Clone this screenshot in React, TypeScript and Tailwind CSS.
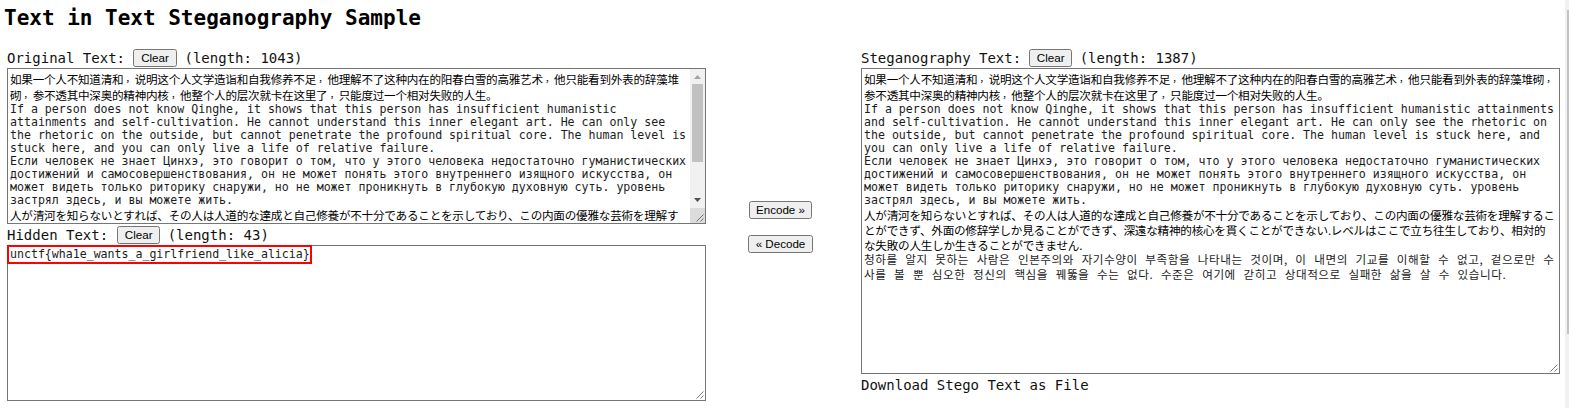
import React from "react";

const zh = "h-[16px] leading-[16px] text-[11.6px] tracking-[-0.26px] font-['Noto_Sans_CJK_SC','Noto_Sans_CJK_TC',sans-serif]";
const en = "h-[13px] leading-[13px] text-[11.6px] tracking-[-0.01px] text-[#1c1c1c] font-['DejaVu_Sans_Mono',monospace]";
const ja = "h-[15px] leading-[16px] text-[11.6px] tracking-[-0.24px] font-['Noto_Sans_CJK_JP',sans-serif]";
const ko = "h-[14.6px] leading-[14.6px] text-[11.6px] tracking-[0.54px] [word-spacing:4.53px] text-[#1c1c1c] font-['Noto_Sans_CJK_KR',sans-serif]";

type Line = [string, string];

const original: Line[] = [
  [zh, "如果一个人不知道清和，说明这个人文学造诣和自我修养不足，他理解不了这种内在的阳春白雪的高雅艺术，他只能看到外表的辞藻堆"],
  [zh, "砌，参不透其中深奥的精神内核，他整个人的层次就卡在这里了，只能度过一个相对失败的人生。"],
  [en, "If a person does not know Qinghe, it shows that this person has insufficient humanistic"],
  [en, "attainments and self-cultivation. He cannot understand this inner elegant art. He can only see"],
  [en, "the rhetoric on the outside, but cannot penetrate the profound spiritual core. The human level is"],
  [en, "stuck here, and you can only live a life of relative failure."],
  [en, "Если человек не знает Цинхэ, это говорит о том, что у этого человека недостаточно гуманистических"],
  [en, "достижений и самосовершенствования, он не может понять этого внутреннего изящного искусства, он"],
  [en, "может видеть только риторику снаружи, но не может проникнуть в глубокую духовную суть. уровень"],
  [en, "застрял здесь, и вы можете жить."],
  [ja, "人が清河を知らないとすれば、その人は人道的な達成と自己修養が不十分であることを示しており、この内面の優雅な芸術を理解す"],
];

const stego: Line[] = [
  [zh, "如果一个人不知道清和，说明这个人文学造诣和自我修养不足，他理解不了这种内在的阳春白雪的高雅艺术，他只能看到外表的辞藻堆砌，"],
  [zh, "参不透其中深奥的精神内核，他整个人的层次就卡在这里了，只能度过一个相对失败的人生。"],
  [en, "If a person does not know Qinghe, it shows that this person has insufficient humanistic attainments"],
  [en, "and self-cultivation. He cannot understand this inner elegant art. He can only see the rhetoric on"],
  [en, "the outside, but cannot penetrate the profound spiritual core. The human level is stuck here, and"],
  [en, "you can only live a life of relative failure."],
  [en, "Если человек не знает Цинхэ, это говорит о том, что у этого человека недостаточно гуманистических"],
  [en, "достижений и самосовершенствования, он не может понять этого внутреннего изящного искусства, он"],
  [en, "может видеть только риторику снаружи, но не может проникнуть в глубокую духовную суть. уровень"],
  [en, "застрял здесь, и вы можете жить."],
  [ja, "人が清河を知らないとすれば、その人は人道的な達成と自己修養が不十分であることを示しており、この内面の優雅な芸術を理解するこ"],
  [ja, "とができず、外面の修辞学しか見ることができず、深遠な精神的核心を貫くことができない.レベルはここで立ち往生しており、相対的"],
  [ja, "な失敗の人生しか生きることができません."],
  [ko, "청하를 알지 못하는 사람은 인본주의와 자기수양이 부족함을 나타내는 것이며, 이 내면의 기교를 이해할 수 없고, 겉으로만 수"],
  [ko, "사를 볼 뿐 심오한 정신의 핵심을 꿰뚫을 수는 없다. 수준은 여기에 갇히고 상대적으로 실패한 삶을 살 수 있습니다."],
];

function Button({ children, className }: { children: React.ReactNode; className: string }) {
  return (
    <button className={`flex h-[18px] items-center justify-center rounded-[2.5px] border border-[#767676] bg-[#efefef] font-['Liberation_Sans',sans-serif] text-[11.6px] leading-none text-black ${className}`}>
      {children}
    </button>
  );
}

function Grip() {
  return (
    <svg className="absolute right-0 bottom-0 h-[15px] w-[15px]" viewBox="0 0 15 15">
      <path d="M6.5 13.5 L13.5 6.5 M10.5 13.5 L13.5 10.5" stroke="#555" strokeWidth="0.8" fill="none" />
    </svg>
  );
}

// Full-width commas are centred in their cell and sit near the baseline.
function withCommas(text: string) {
  return text.split(/(，)/).map((part, i) =>
    part === "，" ? (
      <span key={i} lang="zh-TW" className="relative top-[1px] text-[9px] leading-none tracking-[2.34px] font-['Noto_Sans_CJK_TC',sans-serif]">，</span>
    ) : (
      part
    ),
  );
}

function Lines({ lines }: { lines: Line[] }) {
  return (
    <div className="min-w-0 flex-1 overflow-hidden pt-[2px] pl-[2px] text-black">
      {lines.map(([style, text], i) => (
        <div key={i} className={`whitespace-pre ${style}`}>{withCommas(text)}</div>
      ))}
    </div>
  );
}

function Label({ text, length, button }: { text: string; length: number; button: string }) {
  return (
    <div className="flex h-[20px] items-center whitespace-pre text-[14px] text-[#111]">
      <span>{text}</span>
      <Button className={button}>Clear</Button>
      <span className="ml-[7.5px]">(length: {length})</span>
    </div>
  );
}

export default function App() {
  return (
    <div className="flex h-[408px] w-[1569px] overflow-hidden bg-white font-['DejaVu_Sans_Mono',monospace] text-black">
      <div className="flex w-[1565px] flex-col">
        <h1 className="h-[48px] pt-[4px] pl-[4px] text-[21px] leading-[28px] font-bold tracking-[-0.01px]">Text in Text Steganography Sample</h1>
        <div className="flex pl-[7px]">
          <section className="w-[699px] shrink-0">
            <Label text="Original Text:" length={1043} button="ml-[8px] w-[44px]" />
            <div className="relative flex h-[156px] border border-[#767676]">
              <Lines lines={original} />
              <div className="flex w-[15px] flex-col items-center bg-[#f1f1f1]">
                <svg className="h-[15px] w-[15px]" viewBox="0 0 15 15"><path d="M4 10 L7.5 6 L11 10Z" fill="#a3a3a3" /></svg>
                <div className="h-[78px] w-[11px] bg-[#c1c1c1]" />
                <svg className="mt-[31px] h-[15px] w-[15px]" viewBox="0 0 15 15"><path d="M4 5 L7.5 9 L11 5Z" fill="#505050" /></svg>
                <div className="h-[15px] w-[15px] bg-[#dcdcdc]" />
              </div>
              <Grip />
            </div>
            <div className="h-[21px] pt-px"><Label text="Hidden Text:" length={43} button="ml-[9px] w-[43px]" /></div>
            <div className="relative flex h-[156px] border border-[#767676]">
              <Lines lines={[[en, "unctf{wha1e_wants_a_girlfriend_like_alicia}"]]} />
              <div className="absolute -top-px -left-px h-[19px] w-[305px] border-2 border-[#ff0000]" />
              <Grip />
            </div>
          </section>
          <div className="flex w-[154px] shrink-0 flex-col items-center pt-[153px] pr-[5px]">
            <Button className="w-[63px]">Encode »</Button>
            <Button className="mt-[16px] w-[65px]">« Decode</Button>
          </div>
          <section className="ml-px w-[699px] shrink-0">
            <Label text="Steganography Text:" length={1387} button="ml-[8px] w-[43px]" />
            <div className="relative flex h-[306px] border border-[#767676]">
              <Lines lines={stego} />
              <Grip />
            </div>
            <div className="h-[20px] text-[14px] leading-[22px] text-[#111]">Download Stego Text as File</div>
          </section>
        </div>
      </div>
      <div className="w-[4px] bg-[#f1f1f1] pt-[10px] pl-[2px]">
        <div className="h-[324px] bg-[#c1c1c1]" />
      </div>
    </div>
  );
}
